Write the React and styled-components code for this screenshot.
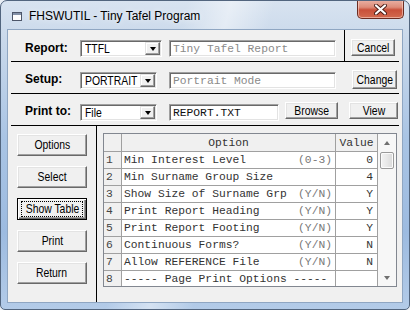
import React from "react";
import styled, { createGlobalStyle } from "styled-components";

const GlobalStyle = createGlobalStyle`
  html, body {
    margin: 0;
    padding: 0;
    background: #e9eef4;
  }
  body {
    width: 410px;
    height: 310px;
    overflow: hidden;
  }
`;

const ui = `"Liberation Sans", Arial, sans-serif`;
const mono = `"Liberation Mono", "Courier New", monospace`;

const Window = styled.div`
  width: 410px;
  height: 310px;
  box-sizing: border-box;
  display: flex;
  flex-direction: column;
  border: 1px solid #52657e;
  border-radius: 7px 7px 5px 5px;
  overflow: hidden;
  background:
    linear-gradient(105deg, transparent 38%, rgba(255, 255, 255, 0.45) 47%, transparent 56%),
    linear-gradient(180deg, #d8e3f0 0%, #cad9eb 12%, #a9c4e4 45%, #9dbbe0 75%, #b3cbe8 100%);
`;

const TitleBar = styled.div`
  height: 29px;
  display: flex;
  align-items: flex-start;
  padding-left: 11px;
  font-family: ${ui};
  font-size: 12px;
  color: #000;
`;

const TitleIcon = styled.svg`
  margin-top: 11px;
  margin-right: 7px;
  flex: none;
`;

const TitleText = styled.div`
  margin-top: 8px;
  flex: 1;
  text-shadow: 0 0 6px rgba(255, 255, 255, 0.9);
`;

const CloseButton = styled.div`
  width: 47px;
  height: 19px;
  margin-right: 5px;
  margin-top: -1px;
  box-sizing: border-box;
  display: flex;
  align-items: center;
  justify-content: center;
  border: 1px solid #6b2c22;
  border-top: none;
  border-radius: 0 0 5px 5px;
  background: linear-gradient(180deg, #eab2a5 0%, #dd8c79 40%, #c9503a 55%, #d26a4f 100%);
  box-shadow: inset 0 0 0 1px rgba(255, 220, 210, 0.55);
`;

const Client = styled.div`
  flex: 1;
  margin: 0 7px 7px;
  background: #f0f0f0;
  display: flex;
  flex-direction: column;
  box-shadow: 0 0 0 1px #8fa6c2;
`;

const Row = styled.div`
  display: flex;
  height: 32px;
  flex: none;
  box-sizing: border-box;
  margin: 0 3px;
  border-bottom: 1px solid #000;
`;

const Section = styled.div`
  display: flex;
  align-items: flex-start;
  flex: ${(p) => (p.$grow ? 1 : "none")};
  padding-top: ${(p) => p.$top || 9}px;
  padding-left: ${(p) => p.$left || 0}px;
  border-left: ${(p) => (p.$divided ? "1px solid #000" : "none")};
`;

const Label = styled.div`
  width: 55px;
  flex: none;
  font-family: ${ui};
  font-weight: bold;
  font-size: 12px;
  line-height: 17px;
  color: #000;
`;

/* narrow system caption: the original uses a condensed UI face */
const Caption = styled.span`
  display: inline-block;
  font-family: ${ui};
  font-size: 13px;
  line-height: 14px;
  white-space: nowrap;
  transform: scaleX(0.8);
  transform-origin: ${(p) => (p.$left ? "left center" : "center")};
`;

const sunken = `
  box-sizing: border-box;
  height: 17px;
  background: #fff;
  border: 1px solid;
  border-color: #a0a0a0 #ffffff #ffffff #a0a0a0;
  box-shadow: inset 1px 1px 0 #696969, inset -1px -1px 0 #e3e3e3;
`;

const Combo = styled.div`
  ${sunken}
  width: ${(p) => p.$width}px;
  margin-top: ${(p) => p.$top || 0}px;
  margin-right: ${(p) => p.$gap}px;
  display: flex;
  align-items: stretch;
  padding: 1px;
`;

const ComboText = styled.div`
  flex: 1;
  min-width: 0;
  padding-left: 3px;
  color: #000;
  line-height: 13px;
  display: flex;
`;

const DropButton = styled.div`
  width: 15px;
  flex: none;
  box-sizing: border-box;
  background: #f0f0f0;
  border: 1px solid;
  border-color: #e3e3e3 #696969 #696969 #e3e3e3;
  box-shadow: inset -1px -1px 0 #a0a0a0, inset 1px 1px 0 #fff;
  display: flex;
  align-items: center;
  justify-content: center;

  &::after {
    content: "";
    border-left: 3.5px solid transparent;
    border-right: 3.5px solid transparent;
    border-top: 4px solid #000;
  }
`;

const TextField = styled.div`
  ${sunken}
  width: ${(p) => p.$width}px;
  margin-top: ${(p) => p.$top || 0}px;
  margin-right: ${(p) => p.$gap || 0}px;
  padding: 1px 0 0 3px;
  font-family: ${mono};
  font-size: 11.3px;
  line-height: 14px;
  color: ${(p) => p.$color || "#111"};
  white-space: pre;
`;

const Button = styled.button`
  width: ${(p) => p.$width}px;
  height: ${(p) => p.$height || 17}px;
  margin: ${(p) => p.$margin || "0"};
  padding: 0;
  box-sizing: border-box;
  color: #000;
  background: #f0f0f0;
  border: 1px solid;
  border-color: ${(p) => (p.$focused ? "#000" : "#fff #696969 #696969 #fff")};
  box-shadow: ${(p) =>
    p.$focused
      ? "inset 1px 1px 0 #fff, inset -1px -1px 0 #696969, inset -2px -2px 0 #a0a0a0"
      : "inset -1px -1px 0 #a0a0a0, inset 1px 1px 0 #e3e3e3"};
  display: flex;
  align-items: center;
  justify-content: center;
  overflow: visible;
  cursor: default;
`;

const FocusRing = styled.div`
  width: 62px;
  height: 16px;
  box-sizing: border-box;
  outline: 1px dotted #000;
  outline-offset: -1px;
  display: flex;
  align-items: center;
  justify-content: center;
`;

const Bottom = styled.div`
  flex: 1;
  display: flex;
  margin: 0 3px;
`;

const SidePanel = styled.div`
  width: 86px;
  flex: none;
  box-sizing: border-box;
  border-right: 1px solid #000;
  display: flex;
  flex-direction: column;
  gap: 10px;
  padding: 8px 0 0 6px;
`;

const TablePanel = styled.div`
  flex: 1;
  padding: 7px 0 0 6px;
`;

const GridFrame = styled.div`
  width: 294px;
  height: 154px;
  box-sizing: border-box;
  display: flex;
  border: 1px solid #828790;
  background: #fff;
  overflow: hidden;
`;

const Table = styled.table`
  width: 274px;
  flex: none;
  table-layout: fixed;
  border-collapse: separate;
  border-spacing: 0;
  font-family: ${mono};
  font-size: 11.3px;
  color: #333;
  align-self: flex-start;
`;

const Head = styled.th`
  height: 17px;
  padding: 0;
  background: #f0f0f0;
  font-weight: normal;
  text-align: center;
  border-right: 1px solid #a0a0a0;
  border-bottom: 1px solid #a0a0a0;
  color: #333;
`;

const NumCell = styled.td`
  height: 16px;
  padding: 0 0 0 2px;
  background: #f0f0f0;
  border-right: 1px solid #a0a0a0;
  border-bottom: 1px solid #a0a0a0;
  color: #444;
`;

const OptionCell = styled.td`
  padding: 0 3px 0 2px;
  border-right: 1px solid #a0a0a0;
  border-bottom: 1px solid #a0a0a0;
  white-space: pre;
`;

const OptionLine = styled.div`
  display: flex;
  justify-content: space-between;
`;

const Hint = styled.span`
  color: #777;
`;

const ValueCell = styled.td`
  padding: 0 4px 0 0;
  text-align: right;
  border-right: 1px solid #a0a0a0;
  border-bottom: 1px solid #a0a0a0;
`;

const ScrollBar = styled.div`
  flex: 1;
  display: flex;
  flex-direction: column;
  background: #f7f7f7;
`;

const ScrollArrow = styled.div`
  height: 17px;
  flex: none;
  display: flex;
  align-items: center;
  justify-content: center;

  &::after {
    content: "";
    border-left: 3.5px solid transparent;
    border-right: 3.5px solid transparent;
    ${(p) => (p.$down ? "border-top" : "border-bottom")}: 4px solid #707070;
  }
`;

const ScrollTrack = styled.div`
  flex: 1;
  padding: 1px 2px 0 2px;
`;

const Thumb = styled.div`
  height: 17px;
  box-sizing: border-box;
  border: 1px solid #9a9a9a;
  border-radius: 2px;
  background: linear-gradient(90deg, #f3f3f3 0%, #e8e8e8 50%, #d9d9d9 100%);
  box-shadow: inset 0 0 0 1px #fbfbfb;
`;

const rows = [
  ["Min Interest Level", "(0-3)", "0"],
  ["Min Surname Group Size", "", "4"],
  ["Show Size of Surname Grp", "(Y/N)", "Y"],
  ["Print Report Heading", "(Y/N)", "Y"],
  ["Print Report Footing", "(Y/N)", "Y"],
  ["Continuous Forms?", "(Y/N)", "N"],
  ["Allow REFERENCE File", "(Y/N)", "N"],
  ["----- Page Print Options -----", "", ""],
];

const sideButtons = ["Options", "Select", "Show Table", "Print", "Return"];

const App = () => {
  return (
    <>
      <GlobalStyle />
      <Window>
        <TitleBar>
          <TitleIcon width="10" height="9" viewBox="0 0 10 9">
            <rect x="0.5" y="0.5" width="9" height="8" fill="#fdfdfd" stroke="#4d5669" />
            <rect x="1" y="1" width="8" height="2" fill="#8391a8" />
          </TitleIcon>
          <TitleText>FHSWUTIL - Tiny Tafel Program</TitleText>
          <CloseButton>
            <svg width="13" height="11" viewBox="0 0 13 11">
              <path
                d="M2 1.5 L11 9.5 M11 1.5 L2 9.5"
                stroke="#4a1c16"
                strokeWidth="4"
                strokeLinecap="round"
              />
              <path
                d="M2 1.5 L11 9.5 M11 1.5 L2 9.5"
                stroke="#ffffff"
                strokeWidth="2.2"
                strokeLinecap="round"
              />
            </svg>
          </CloseButton>
        </TitleBar>

        <Client>
          <Row>
            <Section $left={14} $top={10}>
              <Label>Report:</Label>
              <Combo $width={82} $gap={7}>
                <ComboText>
                  <Caption $left>TTFL</Caption>
                </ComboText>
                <DropButton />
              </Combo>
              <TextField $width={167} $gap={8} $color="#8a8a8a">
                Tiny Tafel Report
              </TextField>
            </Section>
            <Section $divided $left={6} $top={9}>
              <Button $width={44}>
                <Caption>Cancel</Caption>
              </Button>
            </Section>
          </Row>

          <Row>
            <Section $grow $left={14}>
              <Label>Setup:</Label>
              <Combo $width={77} $gap={12} $top={1}>
                <ComboText>
                  <Caption $left>PORTRAIT</Caption>
                </ComboText>
                <DropButton />
              </Combo>
              <TextField $width={167} $gap={16} $top={1} $color="#8a8a8a">
                Portrait Mode
              </TextField>
              <Button $width={45} $height={19} $margin="-1px 0 0 0">
                <Caption>Change</Caption>
              </Button>
            </Section>
          </Row>

          <Row>
            <Section $grow $left={14}>
              <Label>Print to:</Label>
              <Combo $width={77} $gap={12} $top={1}>
                <ComboText>
                  <Caption $left>File</Caption>
                </ComboText>
                <DropButton />
              </Combo>
              <TextField $width={110} $gap={6} $top={1}>
                REPORT.TXT
              </TextField>
              <Button $width={53} $margin="-1px 11px 0 0">
                <Caption>Browse</Caption>
              </Button>
              <Button $width={49} $margin="-1px 0 0 0">
                <Caption>View</Caption>
              </Button>
            </Section>
          </Row>

          <Bottom>
            <SidePanel>
              {sideButtons.map((name) =>
                name === "Show Table" ? (
                  <Button key={name} $width={70} $height={22} $focused>
                    <FocusRing>
                      <Caption>{name}</Caption>
                    </FocusRing>
                  </Button>
                ) : (
                  <Button key={name} $width={70} $height={22}>
                    <Caption>{name}</Caption>
                  </Button>
                )
              )}
            </SidePanel>
            <TablePanel>
              <GridFrame>
                <Table>
                  <colgroup>
                    <col style={{ width: 18 }} />
                    <col style={{ width: 214 }} />
                    <col style={{ width: 42 }} />
                  </colgroup>
                  <thead>
                    <tr>
                      <Head />
                      <Head>Option</Head>
                      <Head>Value</Head>
                    </tr>
                  </thead>
                  <tbody>
                    {rows.map(([text, hint, value], i) => (
                      <tr key={i}>
                        <NumCell>{i + 1}</NumCell>
                        <OptionCell>
                          <OptionLine>
                            <span>{text}</span>
                            {hint && <Hint>{hint}</Hint>}
                          </OptionLine>
                        </OptionCell>
                        <ValueCell>{value}</ValueCell>
                      </tr>
                    ))}
                  </tbody>
                </Table>
                <ScrollBar>
                  <ScrollArrow />
                  <ScrollTrack>
                    <Thumb />
                  </ScrollTrack>
                  <ScrollArrow $down />
                </ScrollBar>
              </GridFrame>
            </TablePanel>
          </Bottom>
        </Client>
      </Window>
    </>
  );
};

export default App;
